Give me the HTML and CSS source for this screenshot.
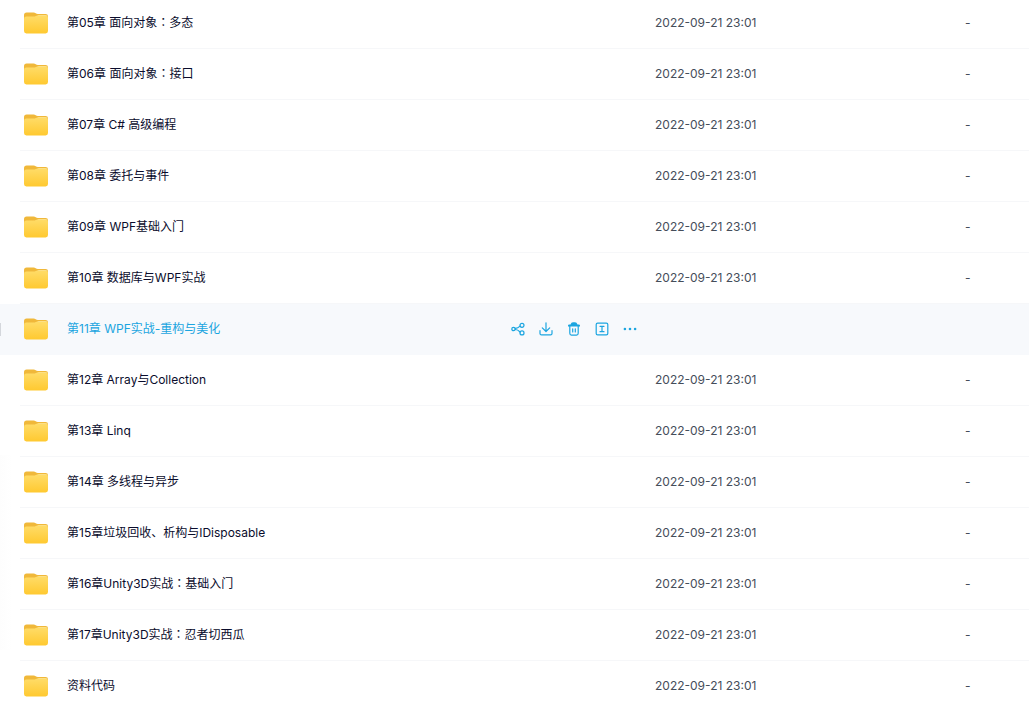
FILE: index.html
```html
<!DOCTYPE html>
<html lang="zh-CN">
<head>
    <meta charset="UTF-8">
    <meta name="viewport" content="width=device-width, initial-scale=1.0">
    <title>文件列表</title>
    <link rel="stylesheet" href="styles.css">
</head>
<body>
    <svg class="symbols" width="0" height="0" aria-hidden="true">
        <defs>
            <linearGradient id="folder-front" x1="0" y1="0" x2="0" y2="1">
                <stop offset="0" stop-color="#ffdc68"/>
                <stop offset="1" stop-color="#ffc930"/>
            </linearGradient>
        </defs>
        <symbol id="folder" viewBox="0 0 24 22">
            <path d="M0 3.2Q0 .5 2.6 .5H9.6Q10.8 .5 11.7 1.2T13.8 1.9H21.6Q24 1.9 24 4.3V10H0Z" fill="#f0b83a"/>
            <path d="M13 4.2Q14 2.9 15.4 2.9H21.4Q23.2 2.9 23.4 5V8H13Z" fill="#f9e3a4"/>
            <path d="M0 7Q0 4.6 2.4 4.6H9.8Q11 4.6 11.8 4.1T13.5 3.6H21.6Q24 3.6 24 6V19.1Q24 21.5 21.6 21.5H2.4Q0 21.5 0 19.1Z" fill="url(#folder-front)"/>
        </symbol>
    </svg>

    <aside class="side-panel">
        <button type="button" class="side-handle" aria-label="收起侧栏"></button>
    </aside>

    <main class="file-list">
        <table>
            <colgroup>
                <col class="col-name">
                <col class="col-date">
                <col class="col-size">
            </colgroup>
            <tbody>
                <tr>
                    <td><div class="file"><svg class="folder"><use href="#folder"/></svg><a href="#">第05章 面向对象<span class="colon" lang="zh-TW">：</span>多态</a></div></td>
                    <td>2022-09-21 23:01</td>
                    <td>-</td>
                </tr>
                <tr>
                    <td><div class="file"><svg class="folder"><use href="#folder"/></svg><a href="#">第06章 面向对象<span class="colon" lang="zh-TW">：</span>接口</a></div></td>
                    <td>2022-09-21 23:01</td>
                    <td>-</td>
                </tr>
                <tr>
                    <td><div class="file"><svg class="folder"><use href="#folder"/></svg><a href="#">第07章 C# 高级编程</a></div></td>
                    <td>2022-09-21 23:01</td>
                    <td>-</td>
                </tr>
                <tr>
                    <td><div class="file"><svg class="folder"><use href="#folder"/></svg><a href="#">第08章 委托与事件</a></div></td>
                    <td>2022-09-21 23:01</td>
                    <td>-</td>
                </tr>
                <tr>
                    <td><div class="file"><svg class="folder"><use href="#folder"/></svg><a href="#">第09章 WPF基础入门</a></div></td>
                    <td>2022-09-21 23:01</td>
                    <td>-</td>
                </tr>
                <tr>
                    <td><div class="file"><svg class="folder"><use href="#folder"/></svg><a href="#">第10章 数据库与WPF实战</a></div></td>
                    <td>2022-09-21 23:01</td>
                    <td>-</td>
                </tr>
                <tr class="active">
                    <td>
                        <div class="file">
                            <svg class="folder"><use href="#folder"/></svg>
                            <a href="#">第11章 WPF实战-重构与美化</a>
                            <div class="actions">
                                <button type="button" aria-label="分享">
                                    <svg viewBox="0 0 14 14"><circle cx="2.5" cy="7" r="1.7"/><circle cx="11" cy="3.3" r="2"/><circle cx="11" cy="10.9" r="2"/><path d="M4.2 6.4Q6.6 6.6 9.1 4.1M4.2 7.5Q6.6 7.4 9.1 10"/></svg>
                                </button>
                                <button type="button" aria-label="下载">
                                    <svg viewBox="0 0 14 14"><path d="M7 .8V9.4M3.3 5.9L7 9.5L10.7 5.9M1 8.6V11.4Q1 12.9 2.5 12.9H11.5Q13 12.9 13 11.4V8.6"/></svg>
                                </button>
                                <button type="button" aria-label="删除">
                                    <svg viewBox="0 0 14 14"><path class="solid" d="M1 4.6V3.6Q1 2.5 2.2 2.5H3.5Q4.2 .3 6 .3H8Q9.8 .3 10.5 2.5H11.8Q13 2.5 13 3.6V4.6Z"/><path d="M2.8 4V11.3Q2.8 13.1 4.5 13.1H9.5Q11.2 13.1 11.2 11.3V4M5.7 6.8V10M8.3 6.8V10"/></svg>
                                </button>
                                <button type="button" aria-label="重命名">
                                    <svg viewBox="0 0 14 14"><rect x="1.2" y="1.2" width="11.6" height="11.6" rx="1.4"/><path d="M5 4.3H9M7 4.3V9.7M5 9.7H9"/></svg>
                                </button>
                                <button type="button" aria-label="更多">
                                    <svg viewBox="0 0 14 14"><g class="solid"><circle cx="1.9" cy="7" r="1.3"/><circle cx="7" cy="7" r="1.3"/><circle cx="12.1" cy="7" r="1.3"/></g></svg>
                                </button>
                            </div>
                        </div>
                    </td>
                    <td></td>
                    <td></td>
                </tr>
                <tr>
                    <td><div class="file"><svg class="folder"><use href="#folder"/></svg><a href="#">第12章 Array与Collection</a></div></td>
                    <td>2022-09-21 23:01</td>
                    <td>-</td>
                </tr>
                <tr>
                    <td><div class="file"><svg class="folder"><use href="#folder"/></svg><a href="#">第13章 Linq</a></div></td>
                    <td>2022-09-21 23:01</td>
                    <td>-</td>
                </tr>
                <tr>
                    <td><div class="file"><svg class="folder"><use href="#folder"/></svg><a href="#">第14章 多线程与异步</a></div></td>
                    <td>2022-09-21 23:01</td>
                    <td>-</td>
                </tr>
                <tr>
                    <td><div class="file"><svg class="folder"><use href="#folder"/></svg><a href="#">第15章垃圾回收、析构与IDisposable</a></div></td>
                    <td>2022-09-21 23:01</td>
                    <td>-</td>
                </tr>
                <tr>
                    <td><div class="file"><svg class="folder"><use href="#folder"/></svg><a href="#">第16章Unity3D实战<span class="colon" lang="zh-TW">：</span>基础入门</a></div></td>
                    <td>2022-09-21 23:01</td>
                    <td>-</td>
                </tr>
                <tr>
                    <td><div class="file"><svg class="folder"><use href="#folder"/></svg><a href="#">第17章Unity3D实战<span class="colon" lang="zh-TW">：</span>忍者切西瓜</a></div></td>
                    <td>2022-09-21 23:01</td>
                    <td>-</td>
                </tr>
                <tr>
                    <td><div class="file"><svg class="folder"><use href="#folder"/></svg><a href="#">资料代码</a></div></td>
                    <td>2022-09-21 23:01</td>
                    <td>-</td>
                </tr>
            </tbody>
        </table>
    </main>
</body>
</html>
```
FILE: styles.css
```css
* {
    margin: 0;
    padding: 0;
    box-sizing: border-box;
}

body {
    font-family: Inter, "Noto Sans CJK SC", sans-serif;
    font-size: 12px;
    line-height: 18px;
    color: #03081a;
    background: #fff;
    overflow: hidden;
}

.symbols {
    position: absolute;
}

/* the list is scrolled slightly past the first row's top edge */
.file-list {
    margin-top: -2px;
    padding-left: 20px;
}

table {
    width: 100%;
    table-layout: fixed;
    border-collapse: separate;
    border-spacing: 0;
}

.col-date {
    width: 310px;
}

.col-size {
    width: 64px;
}

td {
    height: 51px;
    border-bottom: 1px solid #f6f7f9;
    color: #454d5a;
    vertical-align: middle;
}

.file {
    display: flex;
    align-items: center;
    padding: 0 18px 0 4px;
}

.folder {
    flex: none;
    width: 24px;
    height: 22px;
    margin-right: 19px;
}

.file a {
    color: #0a0c2c;
    text-decoration: none;
    white-space: nowrap;
}

/* full-width colon set in the middle of its box */
.colon {
    font-family: "Noto Sans CJK TC", sans-serif;
    line-height: 1;
}

.active td {
    background: #f7f9fc;
    border-bottom-color: #f7f9fc;
}

/* carries the highlight across the left gutter */
.active td:first-child {
    box-shadow: -20px 0 0 #f7f9fc;
}

.active .file a {
    color: #1ba5e0;
}

.actions {
    display: flex;
    gap: 14px;
    margin-left: auto;
}

.actions button {
    width: 14px;
    height: 14px;
    border: none;
    background: none;
    color: #1ba5e0;
    cursor: pointer;
}

.actions svg {
    display: block;
    width: 14px;
    height: 14px;
    fill: none;
    stroke: currentColor;
    stroke-width: 1.2;
    stroke-linecap: round;
    stroke-linejoin: round;
}

.actions .solid {
    fill: currentColor;
    stroke: none;
}

/* soft edge of the panel that sits off to the left */
.side-panel::after {
    content: "";
    position: absolute;
    left: 0;
    top: 455px;
    width: 12px;
    height: 195px;
    background: linear-gradient(to right, #fdfdfd, #fff);
}

.side-handle {
    position: absolute;
    left: 0;
    top: 323px;
    width: 1px;
    height: 13px;
    border: none;
    background: #d4d7dc;
    z-index: 1;
}
```
